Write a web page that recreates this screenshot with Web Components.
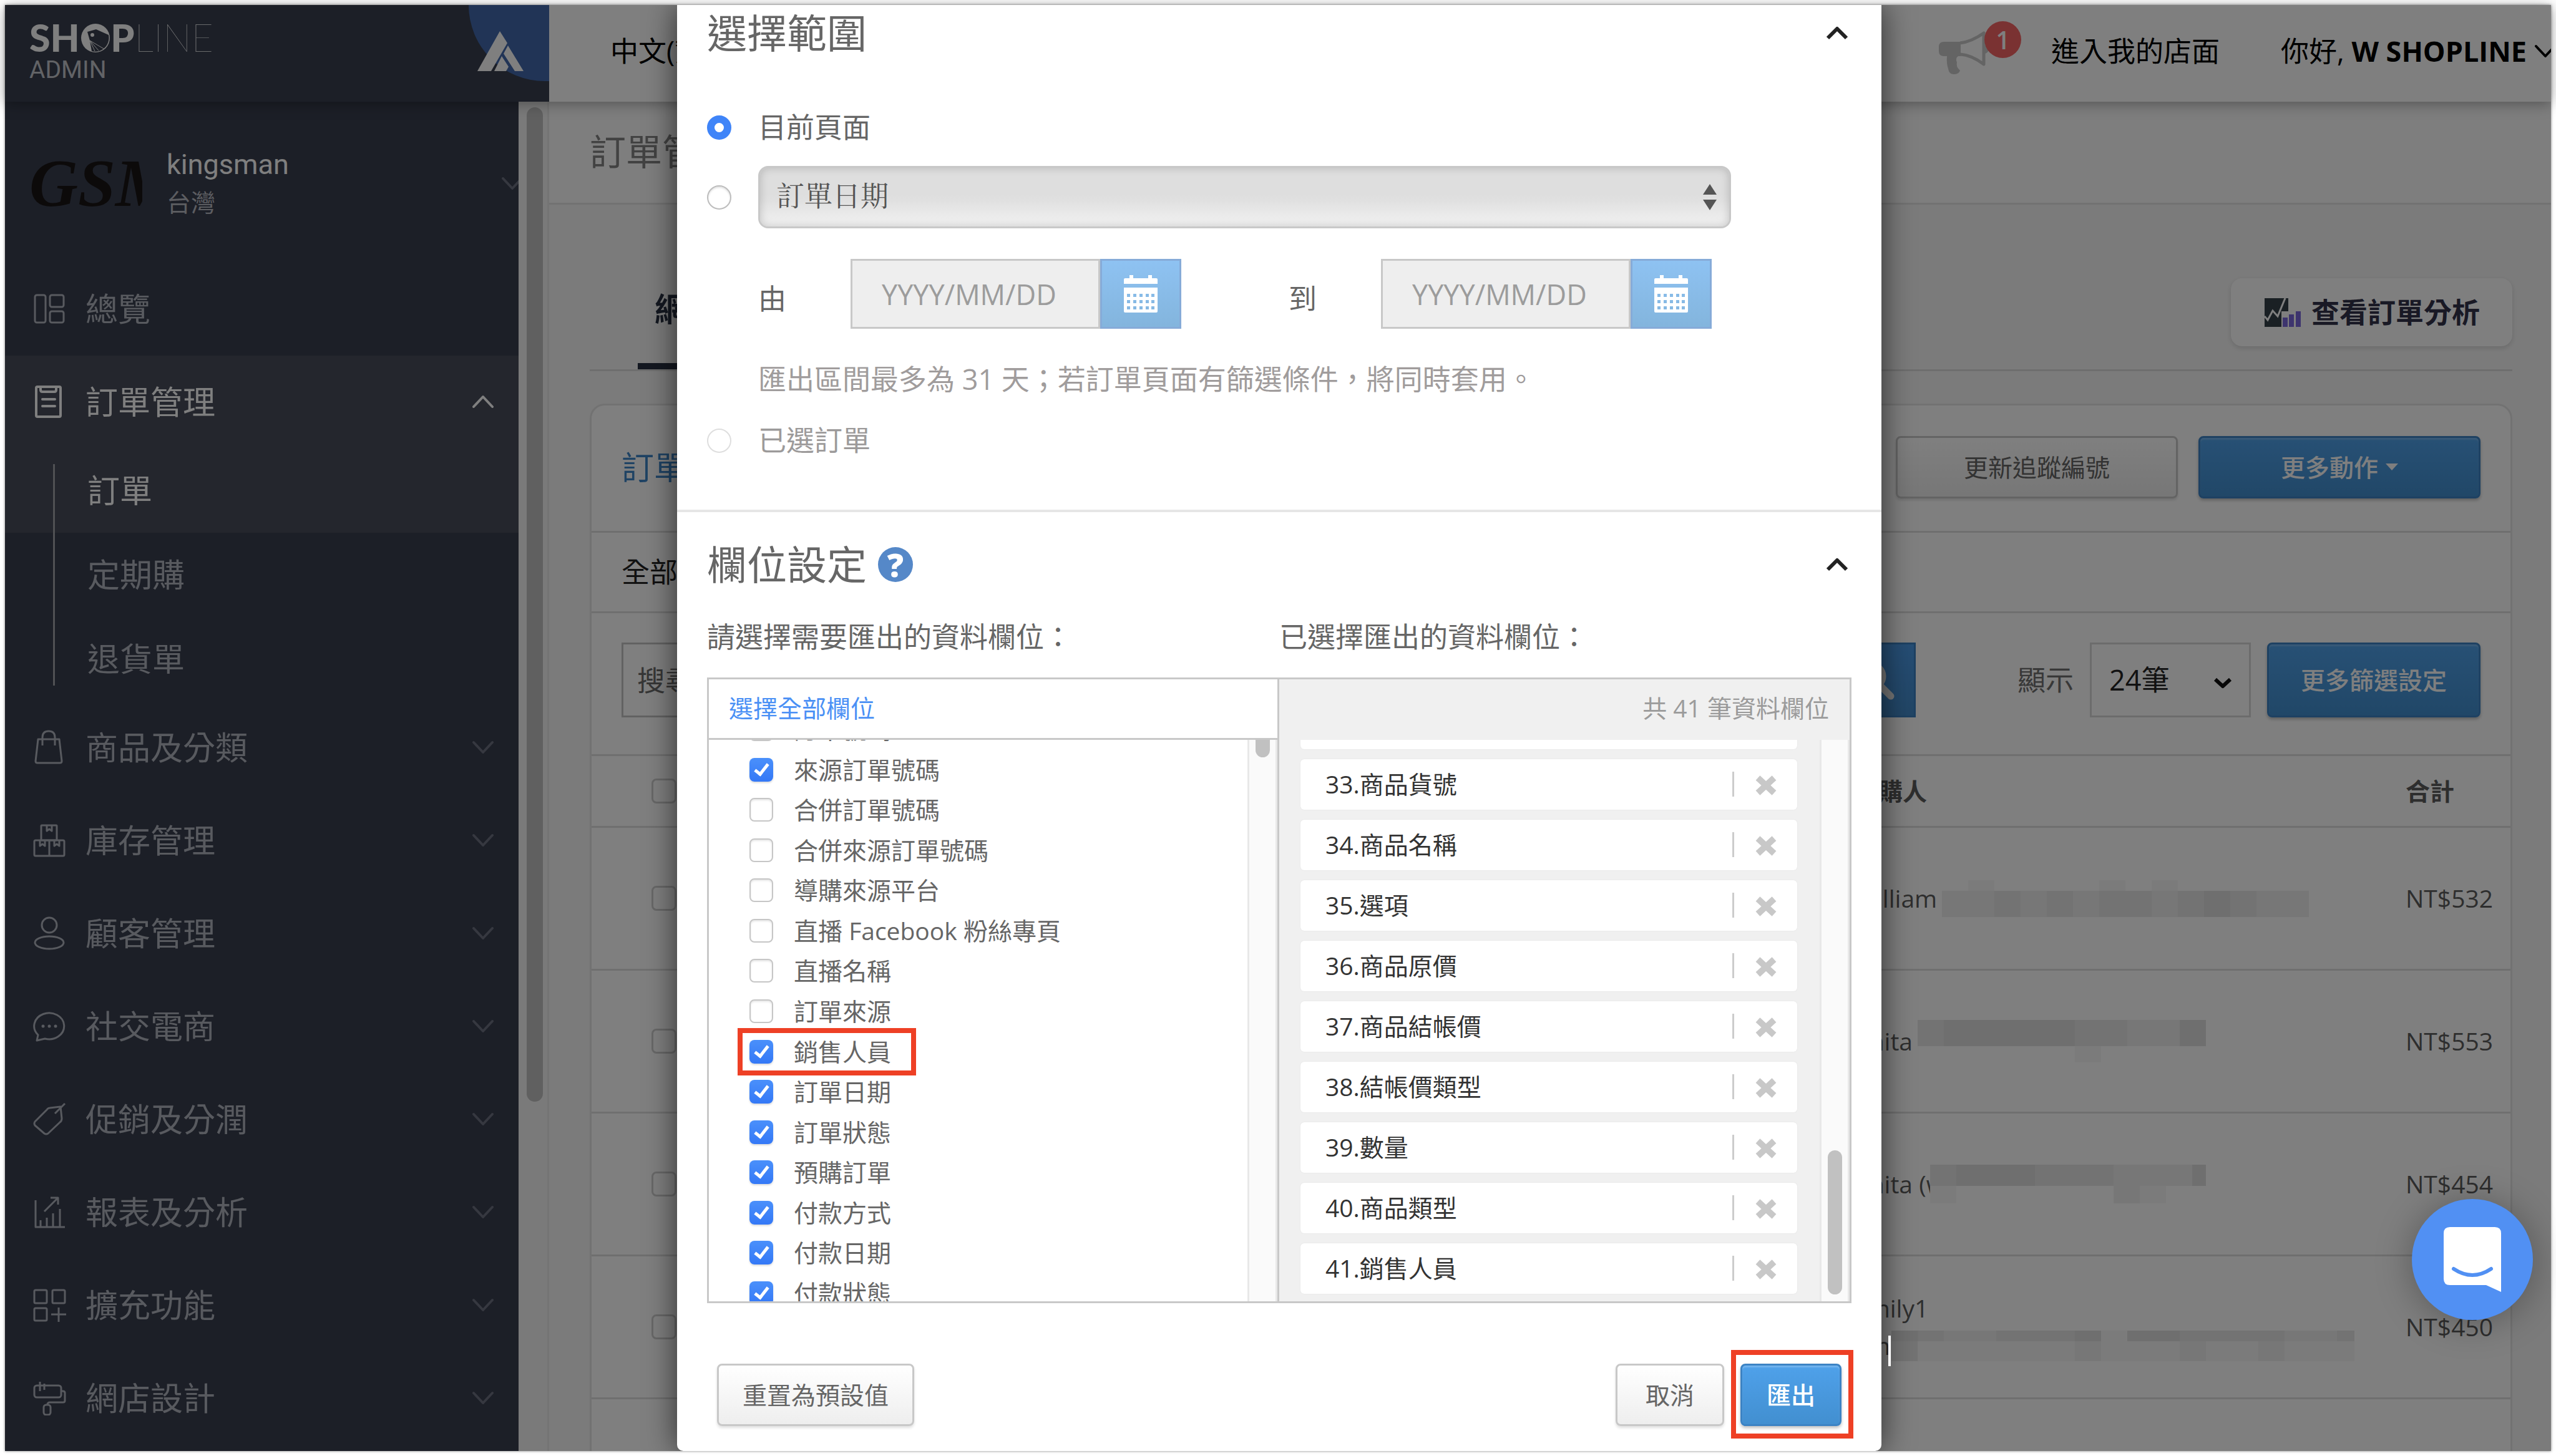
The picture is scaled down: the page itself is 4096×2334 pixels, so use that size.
<!DOCTYPE html>
<html lang="zh-Hant">
<head>
<meta charset="utf-8">
<title>SHOPLINE Admin</title>
<style>
  * { box-sizing: border-box; }
  html, body { height: 100%; }
  body {
    margin: 0;
    padding: 8px;
    overflow: hidden;
    background: #fff;
    font-family: "Open Sans", "Noto Sans CJK TC", sans-serif;
    font-size: 45px;
    line-height: 60px;
  }
</style>
</head>
<body>
<admin-app></admin-app>
<chat-launcher></chat-launcher>

<script>
const html = (strings, ...values) => String.raw({ raw: strings }, ...values);
const css = html;

class Component extends HTMLElement {
  constructor() {
    super();
    this.attachShadow({ mode: 'open' });
  }

  connectedCallback() {
    this.shadowRoot.innerHTML = `
      <style>*, ::before, ::after { box-sizing: border-box; } ${this.styles()}</style>
      ${this.render()}
    `;
  }

  render() { return ''; }
  styles() { return ''; }

  static registerTag(tag) {
    if (!customElements.get(tag)) customElements.define(tag, this);
  }
}

const line = (width, body) =>
  `<g fill="none" stroke="currentColor" stroke-width="${width}" stroke-linejoin="round">${body}</g>`;

// name: [viewBox width, viewBox height, markup]
const ICONS = {
  overview: [56, 56, line(3, '<rect x="5" y="6" width="17" height="44" rx="3"/><rect x="29" y="6" width="22" height="19" rx="3"/><rect x="29" y="32" width="22" height="18" rx="3"/>')],
  orders: [56, 56, line(4, '<rect x="7" y="4" width="39" height="48" rx="2"/><path d="M14 4v5q0 3 3 3h19q3 0 3-3V4M17 24h20M17 35h20" stroke-linecap="round"/>')],
  bag: [56, 56, line(3, '<path d="M10 15h34l4 35q0 3-3 3H9q-3 0-3-3zM17 25V12q0-10 10-10t10 10v13"/>')],
  stock: [56, 56, line(3, '<rect x="15" y="4" width="25" height="24" rx="1"/><rect x="4" y="28" width="48" height="25" rx="2"/><path d="M28 28v25M24 4v9l4-3 4 3V4M13 28v9l4-3 4 3v-9M36 28v9l4-3 4 3v-9"/>')],
  user: [56, 56, line(3, '<circle cx="28" cy="15" r="12"/><ellipse cx="28" cy="43" rx="23" ry="10"/>')],
  social: [56, 56, line(3, '<path d="M10 42A24 21 0 1 1 21 48L8 51z"/>') + '<g fill="currentColor"><circle cx="18" cy="28" r="2.500"/><circle cx="28" cy="28" r="2.500"/><circle cx="38" cy="28" r="2.500"/></g>'],
  tag: [56, 56, line(3, '<path d="M46 8l-17 2q-3 0-5 3L5 32q-2 3 0 6l15 13q3 2 6 0l19-18q3-2 3-6zM53 3L37 19"/>')],
  report: [56, 56, line(3, '<path d="M6 9v43h47M20 27L41 6M30 5h12v11M14 52V41M24 52V37M34 52V30M45 52V23"/>')],
  apps: [56, 56, line(3, '<rect x="4" y="4" width="20" height="21" rx="2"/><rect x="33" y="4" width="20" height="21" rx="2"/><rect x="4" y="33" width="20" height="20" rx="2"/><path d="M43 32v23M31 43h24"/>')],
  roller: [56, 56, line(3, '<rect x="4" y="8" width="43" height="19" rx="4"/><path d="M47 17h3q3 0 3 3v12q0 3-3 3H29q-4 0-4 4M13 2v15M20 5v10"/><rect x="19" y="39" width="11" height="16" rx="4"/>')],
  down: [34, 22, line(4, '<path d="M2 3l15 16L32 3" stroke-linecap="round"/>')],
  up: [34, 22, line(4, '<path d="M2 19L17 3l15 16" stroke-linecap="round"/>')],
  upBold: [36, 24, line(6, '<path d="M3 20L18 5l15 15"/>')],
  downBold: [30, 20, line(6, '<path d="M3 4l12 11L27 4"/>')],
  updown: [22, 42, '<path fill="currentColor" d="M11 0l11 17H0zM11 42L0 25h22z"/>'],
  caret: [20, 11, '<path fill="currentColor" d="M0 0h20L10 11z"/>'],
  cross: [36, 32, '<path d="M5 4l26 24M31 4L5 28" stroke="currentColor" stroke-width="10"/>'],
  search: [64, 64, '<circle cx="26" cy="26" r="19" fill="none" stroke="currentColor" stroke-width="9"/><path d="M40 41l17 17" stroke="currentColor" stroke-width="11" stroke-linecap="round"/>'],
  calendar: [54, 60, '<path fill="currentColor" d="M0 14V7q0-2 2-2h7V0h6v5h24V0h6v5h7q2 0 2 2v7z"/><path fill="currentColor" fill-rule="evenodd" d="M0 20h54v38q0 2-2 2H2q-2 0-2-2zM5 30v5h5v-5zM15 30v5h5v-5zM25 30v5h5v-5zM35 30v5h5v-5zM44 30v5h5v-5zM5 40v5h5v-5zM15 40v5h5v-5zM25 40v5h5v-5zM35 40v5h5v-5zM44 40v5h5v-5zM5 50v5h5v-5zM15 50v5h5v-5zM25 50v5h5v-5zM35 50v5h5v-5zM44 50v5h5v-5z"/>'],
  megaphone: [82, 70, '<path fill="currentColor" d="M8 17h27v23h-4q-5 3-2 10-2 7 5 13-2 6-10 6-8 0-9-9-3-8-2-20H8q-8 0-8-8v-7q0-8 8-8z"/><path fill="none" stroke="currentColor" stroke-width="5" stroke-linejoin="round" d="M34 19Q52 17 72 3v50Q52 38 34 37"/><path fill="currentColor" d="M74 22q6 2 6 7t-6 7z"/>'],
  analytics: [58, 46, '<path fill="#344048" d="M0 0h38v21H27v25H0z"/><path fill="none" stroke="#fff" stroke-width="3" d="M0 29l5 6 8-15 8 9L33 0"/><path fill="#7a68dc" d="M29 31h8v15h-8zM39 26h8v20h-8zM50 21h8v25h-8z"/>'],
  mark: [74, 64, '<path fill="#fff" d="M36 0l12 19-26 45H0zM49 23l25 41H60L42 36zM39 40l11 17-4 7H27z"/>'],
  seal: [48, 48, '<circle cx="24" cy="24" r="24" fill="#383e4e"/><circle cx="24" cy="24" r="23" fill="#fff"/><path fill="#383e4e" d="M11 14L25 10l20 9a22 22 0 0 1-27 26l-3-17z"/><circle cx="19" cy="19" r="3" fill="#fff"/><path stroke="#fff" d="M15 28l22 13M15 28l14 16M15 28l8 17"/>'],
  chat: [92, 104, '<path fill="#fff" d="M10 0h72q10 0 10 10v94L68 93H10Q0 93 0 83V10Q0 0 10 0z"/><path fill="none" stroke="#5190f3" stroke-width="6" stroke-linecap="round" d="M16 67q30 20 60 0"/>']
};

const icon = (name, cls = '') => {
  const [w, h, body] = ICONS[name];
  return html`<svg class="${cls}" width="${w}" height="${h}" viewBox="0 0 ${w} ${h}" aria-hidden="true">${body}</svg>`;
};

class UiButton extends Component {
  styles() {
    return css`
      :host { display: block; }
      button {
        display: flex;
        align-items: center;
        justify-content: center;
        gap: 12px;
        width: 100%;
        height: 100%;
        min-height: 100px;
        padding: 0 40px;
        border: 3px solid #c8c8c8;
        border-radius: 8px;
        background: linear-gradient(#fff, #eee);
        box-shadow: 0 3px 4px rgba(0, 0, 0, .12);
        color: #666;
        font: inherit;
        font-size: 39px;
        white-space: nowrap;
      }
      :host([primary]) button {
        border-color: #3c83c4;
        background: linear-gradient(#4fa1ea, #428fd0);
        box-shadow: inset 0 3px 2px rgba(255, 255, 255, .2), 0 3px 5px rgba(0, 0, 0, .25);
        color: #fff;
        font-weight: 500;
      }
    `;
  }
  render() {
    return html`<button type="button"><slot></slot></button>`;
  }
}
UiButton.registerTag('ui-button');

class AdminTopbar extends Component {
  styles() {
    return css`
      :host {
        position: relative;
        z-index: 1;
        display: flex;
        height: 155px;
        background: #fff;
        box-shadow: 0 3px 22px rgba(0, 0, 0, .35);
        color: #000;
      }
      .brand {
        display: flex;
        justify-content: space-between;
        width: 872px;
        padding-left: 39px;
        background: #383e4e;
        overflow: hidden;
      }
      .logo { padding-top: 22px; color: #fff; font-family: Lato, sans-serif; font-size: 61px; font-weight: 900; text-decoration: none; }
      .logo i { position: relative; font-style: normal; }
      .logo i svg { position: absolute; left: 1px; top: 14px; }
      .logo b { font-weight: 100; }
      .logo small { display: block; color: #c4c6cc; font-family: Roboto, sans-serif; font-size: 39px; font-weight: 400; line-height: 44px; }
      .app { width: 129px; height: 122px; padding: 42px 0 0 14px; border-radius: 0 0 0 126px; background: #4269ac; }
      nav { display: flex; flex: 1; align-items: center; padding: 0 0 8px 98px; overflow: hidden; white-space: nowrap; }
      nav a, nav .user { color: inherit; text-decoration: none; }
      .news { position: relative; height: 70px; margin: 6px 98px 0 auto; color: #c8c8c8; }
      .news svg { display: block; }
      .badge {
        position: absolute;
        left: 73px;
        top: -16px;
        width: 59px;
        border-radius: 50%;
        background: #f46464;
        color: #fff;
        font-size: 39px;
        font-weight: 600;
        line-height: 59px;
        text-align: center;
      }
      .user { display: flex; align-items: center; gap: 13px; margin: 0 -8px 0 98px; padding: 0; border: 0; background: none; font: inherit; }
    `;
  }
  render() {
    return html`
      <div class="brand">
        <a class="logo" href="#">SH<i>O${icon('seal')}</i>P<b>LINE</b><small>ADMIN</small></a>
        <div class="app">${icon('mark')}</div>
      </div>
      <nav>
        <a href="#">中文(繁體)</a>
        <a class="news" href="#" aria-label="最新消息">${icon('megaphone')}<span class="badge">1</span></a>
        <a href="#">進入我的店面</a>
        <button class="user" type="button"><span>你好, <strong>W SHOPLINE</strong></span>${icon('down')}</button>
      </nav>
    `;
  }
}
AdminTopbar.registerTag('admin-topbar');

class NavItem extends Component {
  styles() {
    return css`
      :host { display: block; color: #b0b4be; }
      :host([active]) { background: #484d5b; color: #fff; }
      a {
        display: flex;
        align-items: center;
        gap: 30px;
        height: 149px;
        padding: 0 40px 2px 43px;
        color: inherit;
        font-size: 52px;
        text-decoration: none;
      }
      .arrow { margin-left: auto; color: #6c7080; }
      :host([active]) .arrow { color: #fff; }
      :host([sub]) a { height: 135px; padding-left: 132px; }
    `;
  }
  render() {
    const name = this.getAttribute('icon');
    const arrow = this.getAttribute('arrow');
    return html`
      <a href="#">${name ? icon(name) : ''}<slot></slot>${arrow ? icon(arrow, 'arrow') : ''}</a>
    `;
  }
}
NavItem.registerTag('nav-item');

class AdminSidebar extends Component {
  styles() {
    return css`
      :host { display: flex; width: 872px; overflow: hidden; }
      .panel { flex: 1; background: #383e4e; overflow: hidden; }
      .shop { display: flex; align-items: center; gap: 39px; height: 258px; padding: 4px 0 0 39px; color: #fff; }
      .photo {
        width: 181px;
        color: #181414;
        font: italic 700 108px/80px "Liberation Serif", serif;
        overflow: hidden;
      }
      .name { font-family: Roboto, sans-serif; }
      .region { color: #b8bac2; font-size: 39px; }
      .shop > svg { margin: 0 -7px 0 auto; color: #6c7080; }
      .sub { position: relative; }
      .sub::before { content: ""; position: absolute; left: 77px; top: 25px; bottom: 25px; width: 3px; background: #a0a2a8; }
      .track { width: 49px; padding: 9px 0 0 13px; border-right: 3px solid #e8e8e8; background: #f4f4f4; }
      .thumb { width: 26px; height: 74%; border-radius: 13px; background: #c0c0c0; }
    `;
  }
  render() {
    const items = [
      ['bag', '商品及分類'], ['stock', '庫存管理'], ['user', '顧客管理'], ['social', '社交電商'],
      ['tag', '促銷及分潤'], ['report', '報表及分析'], ['apps', '擴充功能'], ['roller', '網店設計']
    ];
    return html`
      <div class="panel">
        <div class="shop">
          <div class="photo">GSM</div>
          <div><div class="name">kingsman</div><div class="region">台灣</div></div>
          ${icon('down')}
        </div>
        <nav>
          <nav-item icon="overview">總覽</nav-item>
          <nav-item icon="orders" arrow="up" active>訂單管理</nav-item>
          <div class="sub">
            <nav-item sub active>訂單</nav-item>
            <nav-item sub>定期購</nav-item>
            <nav-item sub>退貨單</nav-item>
          </div>
          ${items.map(([name, text]) => `<nav-item icon="${name}" arrow="down">${text}</nav-item>`).join('')}
        </nav>
      </div>
      <div class="track"><div class="thumb"></div></div>
    `;
  }
}
AdminSidebar.registerTag('admin-sidebar');

// Masks personal data. Each row of shades is drawn as cells 42px wide:
// a digit is how dark the cell is, 0 leaves it empty.
class PixelMosaic extends Component {
  styles() {
    return css`
      :host { display: block; flex: none; }
      svg { display: block; }
    `;
  }
  render() {
    const rows = this.getAttribute('rows').split(' ').map(row => row.split(':'));
    const width = Number(this.getAttribute('width'));
    let y = 0;
    let cells = '';
    for (const [height, shades] of rows) {
      [...shades].forEach((shade, i) => {
        const grey = 255 - shade * 8;
        if (shade > 0) cells += `<rect x="${i * 42}" y="${y}" width="42" height="${height}" fill="rgb(${grey},${grey},${grey})"/>`;
      });
      y += Number(height);
    }
    return html`<svg width="${width}" height="${y}" aria-hidden="true">${cells}</svg>`;
  }
}
PixelMosaic.registerTag('pixel-mosaic');

class OrderPage extends Component {
  styles() {
    return css`
      :host { display: block; flex: 1; min-width: 0; background: #f7f7f7; overflow: hidden; }
      h1 {
        height: 165px;
        margin: 0;
        padding-left: 65px;
        border-bottom: 3px solid #e4e4e4;
        background: #fcfcfc;
        color: #858585;
        font-size: 58px;
        font-weight: 400;
        line-height: 160px;
      }
      .content { padding: 0 62px 0 65px; }
      .tabs { display: flex; align-items: flex-start; justify-content: space-between; height: 267px; border-bottom: 3px solid #dcdcdc; }
      .tabs a {
        height: 194px;
        margin: auto 0 0 77px;
        padding: 10px 27px 0;
        border-bottom: 10px solid #283042;
        color: #283042;
        font-size: 52px;
        font-weight: 700;
        line-height: 174px;
        text-decoration: none;
      }
      .report {
        display: flex;
        align-items: center;
        gap: 17px;
        height: 109px;
        margin-top: 118px;
        padding: 0 52px 0 54px;
        border: 0;
        border-radius: 18px;
        background: #fff;
        box-shadow: 0 3px 8px rgba(0, 0, 0, .14);
        color: #32324a;
        font: inherit;
        font-weight: 600;
      }
      .card { margin-top: 52px; border: 3px solid #e4e4e4; border-radius: 24px 24px 0 0; background: #fff; }
      .bar { display: flex; padding: 0 48px; border-bottom: 3px solid #dedede; }
      .actions { align-items: center; gap: 33px; height: 204px; padding-bottom: 4px; }
      .actions ui-button { width: 452px; }
      .actions a { margin-right: auto; color: #3f86c8; font-size: 52px; text-decoration: none; }
      .filter { height: 129px; align-items: center; color: #222; }
      .search { height: 229px; padding-top: 47px; color: #7c7c7c; }
      .search > * { height: 120px; }
      .search input {
        flex: 1;
        min-width: 0;
        padding: 0 22px;
        border: 3px solid #c4c4c4;
        background: #fff;
        font: inherit;
      }
      .search input::placeholder { color: #6c6c6c; opacity: 1; }
      .go { display: flex; align-items: center; justify-content: center; width: 130px; border: 3px solid #3c83c4; background: linear-gradient(#4c9cea, #448ccc); color: #eee; }
      .search label { margin: 0 26px 0 163px; color: #707070; line-height: 120px; }
      .count { position: relative; width: 258px; margin-right: 26px; }
      .count select { appearance: none; width: 100%; height: 100%; padding: 0 28px; border: 3px solid #d8d8d8; background: #fff; color: #222; font: inherit; }
      .count svg { position: absolute; right: 30px; top: 55px; color: #111; }
      .search ui-button { width: 342px; }
      table { width: 100%; border-spacing: 0; table-layout: fixed; color: #5c5c5c; font-size: 39px; }
      th, td { height: 229px; padding: 0; border-bottom: 3px solid #dedede; text-align: left; }
      th { height: 115px; font-weight: 700; }
      .pick { width: 200px; padding-left: 96px; }
      .buyer { width: 884px; }
      .total { width: 168px; }
      .pick input { display: block; appearance: none; width: 40px; height: 40px; margin: 0; border: 3px solid #d0d0d0; border-radius: 8px; background: #fff; }
      .who { display: flex; align-items: center; gap: 8px; white-space: nowrap; }
      .who.over { gap: 0; }
      .who.over pixel-mosaic { margin-left: -24px; }
      .who.tight { gap: 2px; }
    `;
  }
  render() {
    const rows = [
      [html`<div class="who">William<pixel-mosaic width="592" rows="17:01000010100000 42:22323233234322"></pixel-mosaic></div>`, 'NT$532'],
      [html`<div class="who">Anita<pixel-mosaic width="466" rows="42:34444433224 26:00000010000"></pixel-mosaic></div>`, 'NT$553'],
      [html`<div class="who over">Anita (w<pixel-mosaic width="442" rows="34:34443332224 28:10000002100"></pixel-mosaic></div>`, 'NT$454'],
      [html`<div>Emily1</div><div class="who tight">em<pixel-mosaic width="742" rows="17:432233341443333223 32:311111121112112111"></pixel-mosaic></div>`, 'NT$450'],
      ['', '']
    ];
    return html`
      <h1>訂單管理</h1>
      <div class="content">
        <div class="tabs">
          <a href="#">網店訂單</a>
          <button class="report" type="button">${icon('analytics')}查看訂單分析</button>
        </div>
        <div class="card">
          <div class="bar actions">
            <a href="#">訂單</a>
            <ui-button>更新追蹤編號</ui-button>
            <ui-button primary>更多動作${icon('caret')}</ui-button>
          </div>
          <div class="bar filter">全部</div>
          <div class="bar search">
            <input type="search" placeholder="搜尋" aria-label="搜尋">
            <button class="go" type="button" aria-label="搜尋">${icon('search')}</button>
            <label for="count">顯示</label>
            <div class="count"><select id="count"><option>24筆</option></select>${icon('downBold')}</div>
            <ui-button primary>更多篩選設定</ui-button>
          </div>
          <table>
            <thead>
              <tr><th class="pick"><input type="checkbox" aria-label="全選"></th><th></th><th class="buyer">訂購人</th><th class="total">合計</th></tr>
            </thead>
            <tbody>
              ${rows.map(([who, total]) => html`
                <tr><td class="pick"><input type="checkbox" aria-label="選擇訂單"></td><td></td><td>${who}</td><td>${total}</td></tr>
              `).join('')}
            </tbody>
          </table>
        </div>
      </div>
    `;
  }
}
OrderPage.registerTag('order-page');

class DateField extends Component {
  styles() {
    return css`
      :host { display: flex; align-items: flex-start; height: 128px; }
      label { width: 148px; line-height: 128px; }
      input { width: 400px; height: 112px; padding: 0 47px; border: 3px solid #c8c8c8; background: #eee; font: inherit; }
      input::placeholder { color: #9c9c9c; opacity: 1; }
      button {
        display: flex;
        align-items: center;
        justify-content: center;
        width: 130px;
        height: 112px;
        padding: 0;
        border: 3px solid #86abd8;
        background: linear-gradient(#8ec2f2, #83b5dd);
        color: #fff;
      }
    `;
  }
  render() {
    const label = this.getAttribute('label');
    return html`
      <label for="date">${label}</label>
      <input id="date" type="text" placeholder="YYYY/MM/DD">
      <button type="button" aria-label="選擇日期">${icon('calendar')}</button>
    `;
  }
}
DateField.registerTag('date-field');

class FieldOption extends Component {
  styles() {
    return css`
      :host { display: flex; align-items: center; }
      label { position: relative; display: flex; align-items: center; gap: 33px; font-size: 39px; white-space: nowrap; }
      input {
        position: relative;
        appearance: none;
        width: 38px;
        height: 38px;
        margin: 0;
        border: 2px solid #c6c6c6;
        border-radius: 8px;
        background: #fff;
        box-shadow: inset 0 2px 3px rgba(0, 0, 0, .1);
      }
      input:checked { border: 0; background: linear-gradient(#4a90fb, #3478f6); box-shadow: 0 2px 3px rgba(0, 0, 0, .15); }
      input:checked::before {
        content: "";
        position: absolute;
        left: 13px;
        top: 5px;
        width: 13px;
        height: 23px;
        border: solid #fff;
        border-width: 0 5px 5px 0;
        transform: rotate(38deg);
      }
      :host([highlight]) label::after { content: ""; position: absolute; inset: -8px -40px -8px -19px; border: 8px solid #ee4025; }
    `;
  }
  render() {
    return html`<label><input type="checkbox" ${this.hasAttribute('checked') ? 'checked' : ''}><slot></slot></label>`;
  }
}
FieldOption.registerTag('field-option');

class FieldCard extends Component {
  styles() {
    return css`
      :host {
        display: flex;
        align-items: center;
        height: 81px;
        padding: 0 32px 2px 40px;
        border-radius: 6px;
        background: #fff;
        box-shadow: 0 0 2px rgba(0, 0, 0, .08);
        color: #333;
        font-size: 39px;
      }
      button { display: flex; margin-left: auto; padding: 6px 0 2px 33px; border: 0; border-left: 3px solid #ccc; background: none; color: #c8c8c8; }
    `;
  }
  render() {
    return html`<slot></slot><button type="button" aria-label="移除">${icon('cross')}</button>`;
  }
}
FieldCard.registerTag('field-card');

class ExportModal extends Component {
  styles() {
    return css`
      :host {
        position: absolute;
        inset: 0;
        z-index: 2;
        display: flex;
        justify-content: center;
        padding-left: 4px;
        background: rgba(0, 0, 0, .5);
        overflow: hidden;
        color: #666;
      }
      form { width: 1930px; border-radius: 0 0 10px 10px; background: #fff; box-shadow: 0 0 50px rgba(0, 0, 0, .65); }
      .cursor { position: absolute; left: calc(50% + 978px); top: 2133px; width: 4px; height: 49px; background: #fff; }
      section { padding: 0 48px; }
      .range { padding-bottom: 77px; border-bottom: 4px solid #e6e6e6; }
      header { display: flex; align-items: center; gap: 18px; height: 90px; }
      h2 { margin: 0; font-size: 64px; font-weight: 400; }
      .toggle { display: flex; margin-left: auto; padding: 0 5px 0 0; border: 0; background: none; color: #222; }
      .help { width: 56px; height: 56px; border-radius: 50%; background: #5588c8; color: #fff; font-size: 52px; font-weight: 800; line-height: 56px; text-align: center; text-decoration: none; }
      .row { display: grid; grid-template-columns: 82px 1559px; align-items: center; line-height: 66px; height: 68px; }
      .row:nth-of-type(1) { margin-top: 72px; }
      .row.by-date { height: 100px; margin-top: 28px; }
      input[type="radio"] { appearance: none; width: 39px; height: 39px; margin: 0; border: 2px solid #bdbdbd; border-radius: 50%; background: #fff; box-shadow: inset 0 2px 3px rgba(0, 0, 0, .12); }
      input[type="radio"]:checked { border: 12px solid #3f84f8; box-shadow: none; }
      input[type="radio"]:disabled { border-color: #dedede; box-shadow: none; }
      .select { position: relative; height: 100px; }
      .select select {
        appearance: none;
        width: 100%;
        height: 100%;
        padding: 0 26px;
        border: 3px solid #c8c8c8;
        border-radius: 16px;
        background: linear-gradient(#dedede 45%, #e0e0e0 55%, #f2f2f2);
        box-shadow: inset 0 0 14px rgba(0, 0, 0, .18);
        color: #555;
        font: inherit;
        font-family: "Liberation Serif", "Noto Serif CJK TC", "Noto Sans CJK TC", serif;
      }
      .select svg { position: absolute; right: 23px; top: 29px; color: #555; }
      .dates { display: flex; gap: 172px; margin: 49px 0 0 82px; }
      .note { margin: 35px 0 34px 82px; color: #a09c9c; }
      .off { color: #9c9a9a; }
      .fields header { margin-top: 39px; }
      .captions { display: grid; grid-template-columns: 1fr 1fr; margin-top: 37px; line-height: 68px; }
      .picker { display: grid; grid-template-columns: 1fr 1fr; height: 1003px; margin-top: 31px; border: 3px solid #c8c8c8; }
      .picker > div { display: flex; flex-direction: column; min-height: 0; font-size: 39px; }
      .head { flex: none; height: 97px; line-height: 92px; }
      .all { padding-left: 32px; border-bottom: 3px solid #c8c8c8; }
      .all a { color: #4a90f5; text-decoration: none; }
      .available { border-right: 3px solid #c8c8c8; }
      .chosen { background: #f0f0f0; }
      .chosen .head { padding-right: 33px; color: #9b9b9b; text-align: right; }
      .scroll { display: flex; flex: 1; min-height: 0; overflow: hidden; }
      .scroll > div:first-child { flex: 1; }
      .options { display: grid; grid-template-rows: repeat(15, 1fr); height: 968px; margin-top: -49px; padding-left: 65px; }
      .cards { display: grid; gap: 16px; align-content: start; margin-top: -66px; padding: 0 36px 0 34px; }
      .bar { flex: none; display: flex; align-items: flex-start; width: 48px; padding: 0 9px 0 10px; border: solid #e8e8e8; border-width: 0 3px; background: #fafafa; }
      .bar i { width: 26px; height: 28px; border-radius: 0 0 13px 13px; background: #c1c1c1; }
      .chosen .bar { align-items: flex-end; padding-bottom: 11px; }
      .chosen .bar i { height: 231px; border-radius: 13px; }
      footer { display: flex; gap: 26px; padding: 97px 16px 0; }
      footer ui-button:first-child { width: 316px; margin-right: auto; }
      footer .cancel { width: 174px; }
      footer .submit { position: relative; width: 162px; }
      .submit::after { content: ""; position: absolute; inset: -22px -19px -20px -15px; border: 8px solid #ee4025; pointer-events: none; }
    `;
  }
  render() {
    const options = [
      ['訂單號碼', 0], ['來源訂單號碼', 1], ['合併訂單號碼', 0], ['合併來源訂單號碼', 0],
      ['導購來源平台', 0], ['直播 Facebook 粉絲專頁', 0], ['直播名稱', 0], ['訂單來源', 0],
      ['銷售人員', 1], ['訂單日期', 1], ['訂單狀態', 1], ['預購訂單', 1],
      ['付款方式', 1], ['付款日期', 1], ['付款狀態', 1]
    ];
    const chosen = ['商品貨號', '商品名稱', '選項', '商品原價', '商品結帳價', '結帳價類型', '數量', '商品類型', '銷售人員'];
    return html`
      <form>
        <section class="range">
          <header>
            <h2>選擇範圍</h2>
            <button class="toggle" type="button" aria-label="收合">${icon('upBold')}</button>
          </header>
          <div class="row">
            <input type="radio" name="range" id="current" checked>
            <label for="current">目前頁面</label>
          </div>
          <div class="row by-date">
            <input type="radio" name="range" aria-label="訂單日期">
            <div class="select">
              <select aria-label="日期類型"><option>訂單日期</option></select>
              ${icon('updown')}
            </div>
          </div>
          <div class="dates">
            <date-field label="由"></date-field>
            <date-field label="到"></date-field>
          </div>
          <div class="note">匯出區間最多為 31 天；若訂單頁面有篩選條件，將同時套用。</div>
          <div class="row off">
            <input type="radio" name="range" id="picked" disabled>
            <label for="picked">已選訂單</label>
          </div>
        </section>
        <section class="fields">
          <header>
            <h2>欄位設定</h2>
            <a class="help" href="#">?</a>
            <button class="toggle" type="button" aria-label="收合">${icon('upBold')}</button>
          </header>
          <div class="captions"><span>請選擇需要匯出的資料欄位：</span><span>已選擇匯出的資料欄位：</span></div>
          <div class="picker">
            <div class="available">
              <div class="head all"><a href="#">選擇全部欄位</a></div>
              <div class="scroll">
                <div class="options">
                  ${options.map(([name, on]) => `<field-option ${on ? 'checked' : ''} ${name === '銷售人員' ? 'highlight' : ''}>${name}</field-option>`).join('')}
                </div>
                <div class="bar"><i></i></div>
              </div>
            </div>
            <div class="chosen">
              <div class="head">共 41 筆資料欄位</div>
              <div class="scroll">
                <div class="cards">
                  <field-card></field-card>
                  ${chosen.map((name, i) => `<field-card>${i + 33}.${name}</field-card>`).join('')}
                </div>
                <div class="bar"><i></i></div>
              </div>
            </div>
          </div>
          <footer>
            <ui-button>重置為預設值</ui-button>
            <ui-button class="cancel">取消</ui-button>
            <ui-button class="submit" primary>匯出</ui-button>
          </footer>
        </section>
      </form>
      <div class="cursor"></div>
    `;
  }
}
ExportModal.registerTag('export-modal');

class ChatLauncher extends Component {
  styles() {
    return css`
      :host { position: fixed; right: 37px; bottom: 218px; z-index: 3; }
      button {
        display: flex;
        align-items: center;
        justify-content: center;
        width: 194px;
        height: 194px;
        border: 0;
        border-radius: 50%;
        background: #5190f3;
        box-shadow: 0 4px 60px rgba(0, 0, 0, .3);
      }
    `;
  }
  render() {
    return html`<button type="button" aria-label="聊天">${icon('chat')}</button>`;
  }
}
ChatLauncher.registerTag('chat-launcher');

class AdminApp extends Component {
  styles() {
    return css`
      :host {
        position: relative;
        display: flex;
        flex-direction: column;
        height: 100%;
        box-shadow: 0 0 4px rgba(0, 0, 0, .5);
      }
      main { display: flex; flex: 1; min-height: 0; }
    `;
  }
  render() {
    return html`
      <admin-topbar></admin-topbar>
      <main>
        <admin-sidebar></admin-sidebar>
        <order-page></order-page>
      </main>
      <export-modal></export-modal>
    `;
  }
}
AdminApp.registerTag('admin-app');
</script>
</body>
</html>
